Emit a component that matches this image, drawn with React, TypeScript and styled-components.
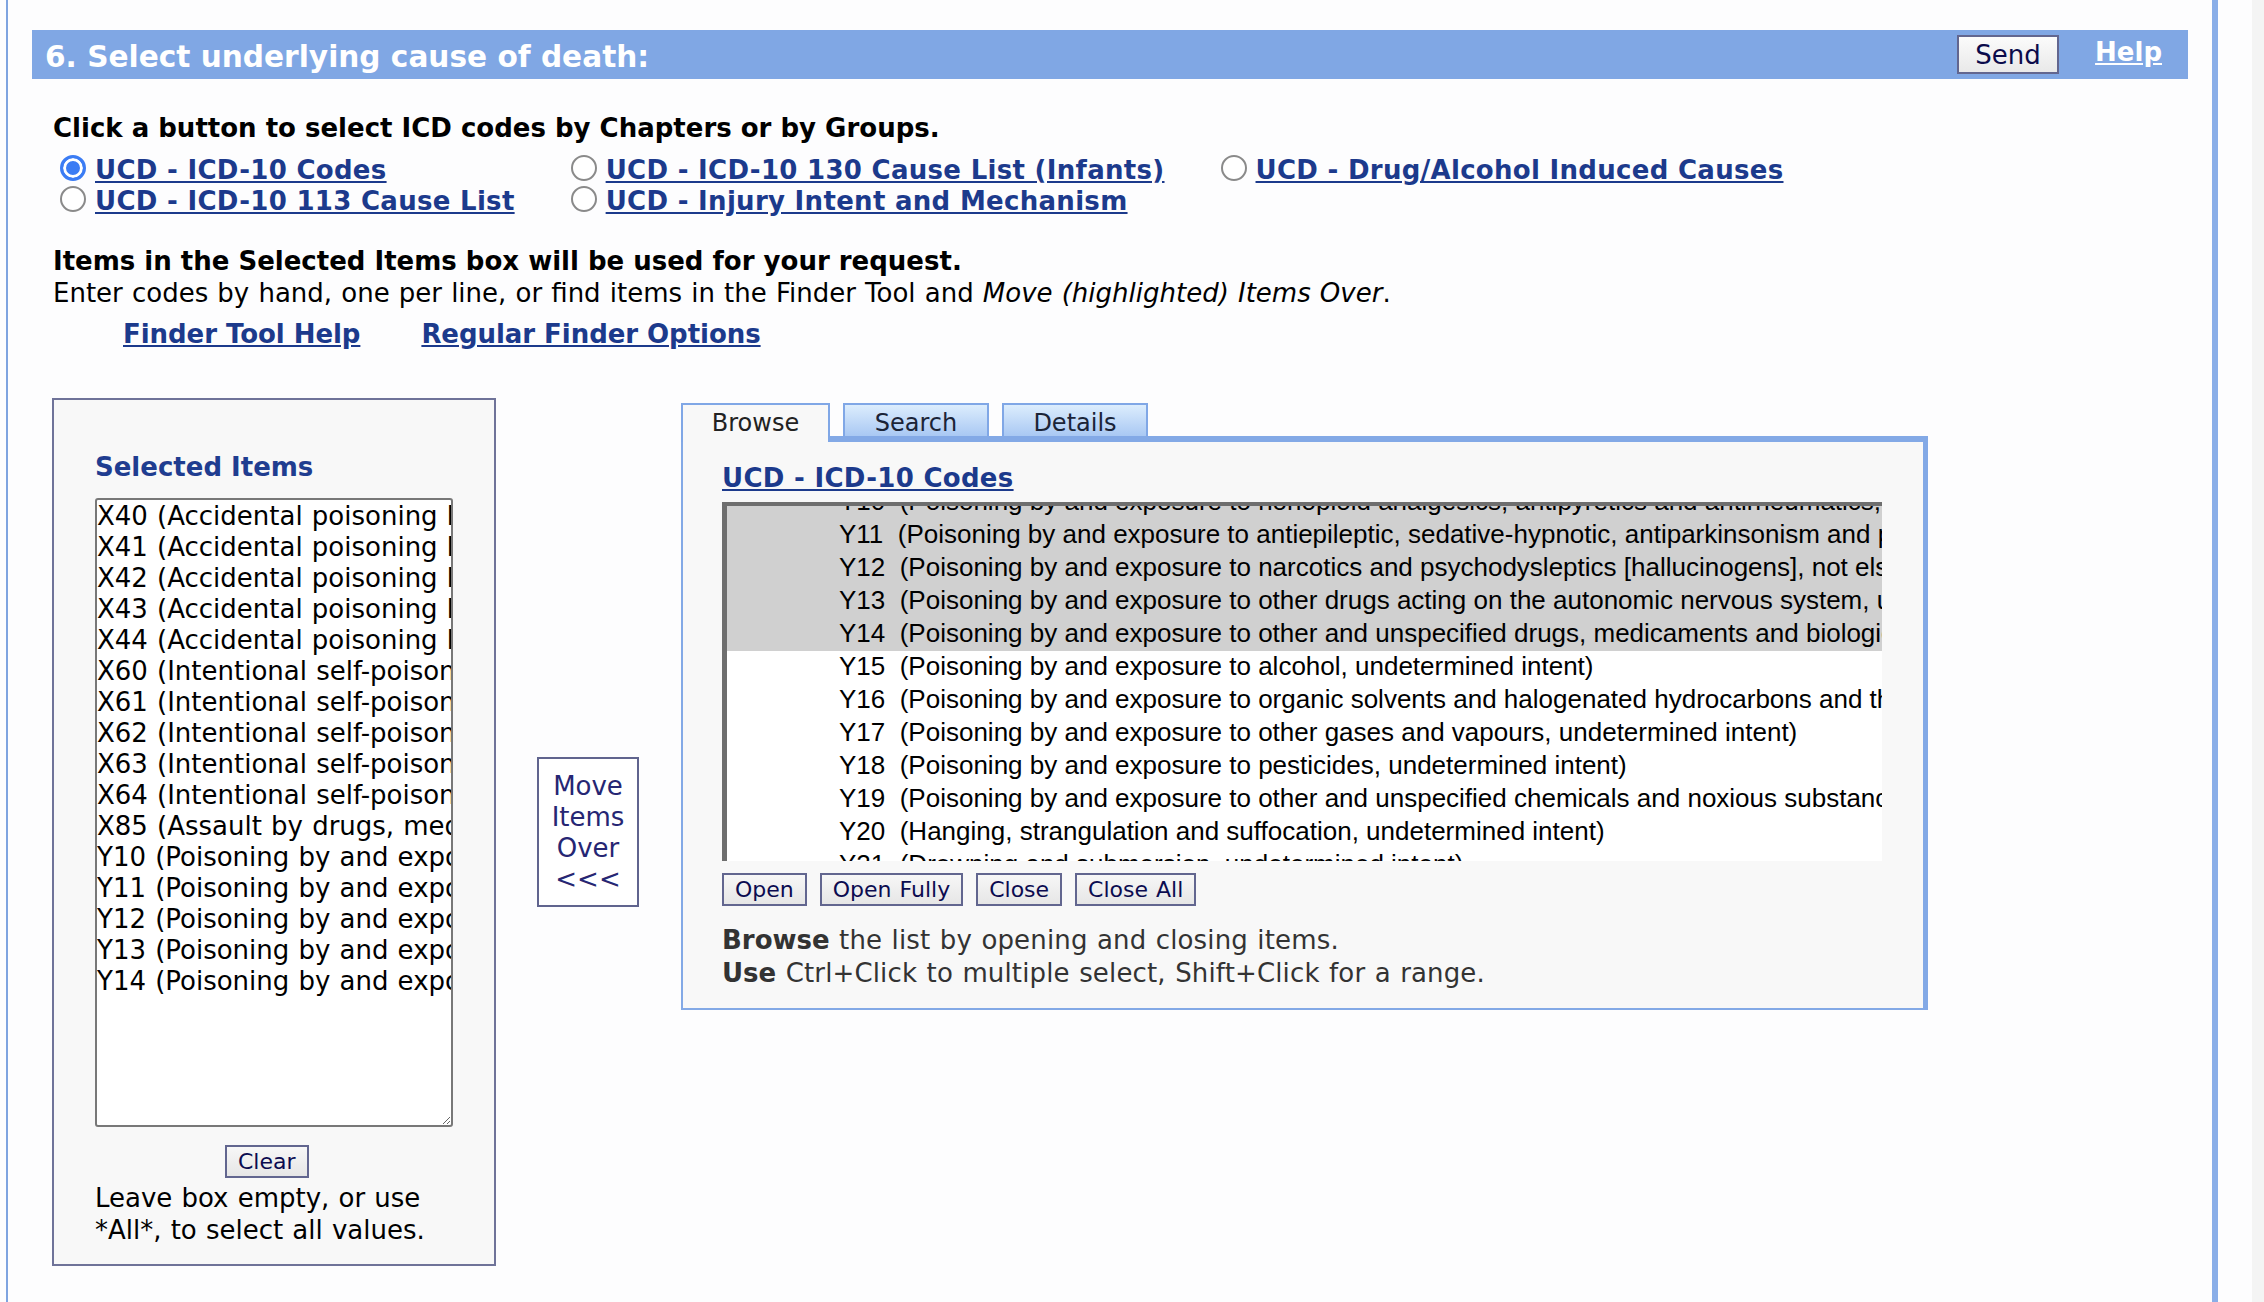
import React from "react";
import styled, { createGlobalStyle } from "styled-components";

const GlobalStyle = createGlobalStyle`
  *, *::before, *::after { box-sizing: border-box; }
  html, body { margin: 0; padding: 0; background: #fdfdfe; }
  body { font-family: "DejaVu Sans", Verdana, sans-serif; color: #000; }
`;

const Viewport = styled.div`
  display: flex;
  height: 1302px;
  overflow: hidden;
`;

const Page = styled.div`
  margin-left: 6px;
  width: 2212px;
  border-left: 2px solid #7fa4e0;
  border-right: 6px solid #8aaee8;
  padding: 30px 24px 0;
`;

const ScrollTrack = styled.div`
  margin-left: auto;
  width: 12px;
  background: #f4f4f4;
`;

const HeaderBar = styled.div`
  display: flex;
  align-items: center;
  height: 49px;
  background: #80a7e4;
  padding: 0 26px 0 13px;
`;

const Title = styled.h2`
  flex: 1;
  margin: 4px 0 0;
  font-size: 29.6px;
  font-weight: bold;
  color: #fff;
  white-space: nowrap;
`;

const SendButton = styled.button`
  width: 102px;
  height: 39px;
  margin-right: 36px;
  padding: 0;
  border: 2px solid #62668f;
  background: linear-gradient(#fbfbfb, #e9e9e9);
  color: #0b0b4b;
  font: 26px "DejaVu Sans", Verdana, sans-serif;
`;

const HelpLink = styled.a`
  margin-bottom: 5px;
  font-size: 26px;
  font-weight: bold;
  color: #fff;
  text-decoration: underline;
`;

const Body = styled.div`
  padding-left: 21px;
`;

const Para = styled.p<{ $lh: number; $mt: number; $bold?: boolean }>`
  margin: ${(p) => p.$mt}px 0 0;
  font-size: 26px;
  line-height: ${(p) => p.$lh}px;
  font-weight: ${(p) => (p.$bold ? "bold" : "normal")};
  word-spacing: ${(p) => (p.$bold ? 0 : 0.9)}px;
  white-space: nowrap;
`;

const Strong = styled.strong`
  font-weight: bold;
  word-spacing: 0;
  letter-spacing: 0;
`;

const RadioGrid = styled.div`
  display: grid;
  grid-template-columns: repeat(3, max-content);
  column-gap: 56px;
  margin-top: 11px;
  padding-left: 7px;
`;

const RadioOption = styled.label`
  display: flex;
  align-items: flex-start;
  gap: 9px;
  height: 31px;
  font-size: 26px;
  line-height: 31px;
`;

const Radio = styled.input.attrs({ type: "radio" })`
  appearance: none;
  margin: 0;
  width: 26px;
  height: 26px;
  flex: none;
  border-radius: 50%;
  border: 2px solid #8a8a8a;
  background: #fff;
  &:checked {
    border: 3px solid #3b7cf4;
    background: #3b7cf4;
    box-shadow: inset 0 0 0 3px #fff;
  }
`;

const BlueLink = styled.a<{ $tight?: boolean }>`
  font-weight: bold;
  color: #1c3a8c;
  text-decoration: underline;
  letter-spacing: ${(p) => (p.$tight ? -0.05 : 0.3)}px;
  white-space: nowrap;
`;

const LinkRow = styled.div`
  display: flex;
  gap: 61px;
  margin-top: 10px;
  padding-left: 70px;
  font-size: 26px;
  line-height: 31px;
`;

const PanelsRow = styled.div`
  display: flex;
  align-items: flex-start;
  margin-top: 48px;
  margin-left: -1px;
`;

const SelectedPanel = styled.div`
  width: 444px;
  border: 2px solid #6f7399;
  background: #f8f8f8;
  padding: 52px 41px 18px;
`;

const PanelHeading = styled.div`
  font-size: 26px;
  line-height: 31px;
  font-weight: bold;
  color: #1f3d90;
`;

const ItemsBox = styled.textarea`
  display: block;
  width: 358px;
  height: 629px;
  margin-top: 15px;
  padding: 1px 0;
  border: 2px solid #787878;
  border-radius: 3px;
  background: #fff;
  color: #000;
  font: 26px/31px "DejaVu Sans", Verdana, sans-serif;
  word-spacing: 0.9px;
  white-space: pre;
  overflow: hidden;
  resize: both;
  outline: none;
`;

const SmallButton = styled.button<{ $ml?: number }>`
  height: 33px;
  margin-left: ${(p) => p.$ml ?? 0}px;
  padding: 0 11px;
  border: 2px solid #62668f;
  background: linear-gradient(#f7f7f7, #e6e6e6);
  color: #0b0b50;
  font: 22px "DejaVu Sans", Verdana, sans-serif;
  word-spacing: 1px;
`;

const ClearWrap = styled.div`
  margin-top: 18px;
`;

const Note = styled.div`
  margin-top: 4px;
  font-size: 26px;
  line-height: 32px;
  word-spacing: 0.9px;
  white-space: nowrap;
`;

const MoveButton = styled.button`
  align-self: center;
  width: 102px;
  height: 150px;
  margin: 0 42px 0 41px;
  padding: 2px 0 0;
  border: 2px solid #60648e;
  background: #fff;
  color: #262673;
  font: 26px/31px "DejaVu Sans", Verdana, sans-serif;
`;

const FinderBox = styled.div`
  width: 1247px;
  margin-top: 5px;
`;

const TabStrip = styled.div`
  display: flex;
  align-items: flex-start;
  gap: 13px;
  height: 33px;
`;

const Tab = styled.div<{ $active?: boolean }>`
  position: relative;
  z-index: 1;
  width: ${(p) => (p.$active ? 149 : 146)}px;
  height: ${(p) => (p.$active ? 39 : 33)}px;
  padding-top: 4px;
  border: 2px solid #80a7e6;
  border-bottom: none;
  background: ${(p) =>
    p.$active ? "#f8f8f8" : "linear-gradient(#dcedfd, #a9c8f3)"};
  color: ${(p) => (p.$active ? "#222" : "#1b2437")};
  font-size: 24px;
  text-align: center;
`;

const FinderBody = styled.div`
  border: 2px solid #83a9e6;
  border-top-width: 6px;
  border-right-width: 5px;
  background: #f8f8f8;
  padding: 21px 41px 18px 39px;
`;

const FinderTitle = styled.div`
  font-size: 26px;
  line-height: 31px;
`;

const TreeList = styled.div`
  height: 359px;
  margin-top: 8px;
  border-top: 4px solid #6e6e6e;
  border-left: 5px solid #6e6e6e;
  background: #fff;
  overflow: hidden;
`;

const TreeInner = styled.div`
  margin-top: -20px;
`;

const TreeRow = styled.div<{ $selected?: boolean }>`
  height: 33px;
  padding-left: 112px;
  background: ${(p) => (p.$selected ? "#d0d0d0" : "transparent")};
  font: 26px/30px "Liberation Sans", Arial, sans-serif;
  color: #000;
  white-space: pre;
`;

const ButtonRow = styled.div`
  display: flex;
  gap: 13px;
  margin-top: 12px;
`;

const HelpText = styled.div`
  margin-top: 18px;
  font-size: 26px;
  line-height: 33px;
  word-spacing: 1px;
  letter-spacing: 0.15px;
  color: #333;
  white-space: nowrap;
`;

const selectedItems = [
  "X40 (Accidental poisoning by and exposure to nonopioid analgesics, antipyretics and antirheumatics)",
  "X41 (Accidental poisoning by and exposure to antiepileptic, sedative-hypnotic, antiparkinsonism and psychotropic drugs, not elsewhere classified)",
  "X42 (Accidental poisoning by and exposure to narcotics and psychodysleptics [hallucinogens], not elsewhere classified)",
  "X43 (Accidental poisoning by and exposure to other drugs acting on the autonomic nervous system)",
  "X44 (Accidental poisoning by and exposure to other and unspecified drugs, medicaments and biological substances)",
  "X60 (Intentional self-poisoning by and exposure to nonopioid analgesics, antipyretics and antirheumatics)",
  "X61 (Intentional self-poisoning by and exposure to antiepileptic, sedative-hypnotic, antiparkinsonism and psychotropic drugs, not elsewhere classified)",
  "X62 (Intentional self-poisoning by and exposure to narcotics and psychodysleptics [hallucinogens], not elsewhere classified)",
  "X63 (Intentional self-poisoning by and exposure to other drugs acting on the autonomic nervous system)",
  "X64 (Intentional self-poisoning by and exposure to other and unspecified drugs, medicaments and biological substances)",
  "X85 (Assault by drugs, medicaments and biological substances)",
  "Y10 (Poisoning by and exposure to nonopioid analgesics, antipyretics and antirheumatics, undetermined intent)",
  "Y11 (Poisoning by and exposure to antiepileptic, sedative-hypnotic, antiparkinsonism and psychotropic drugs, not elsewhere classified, undetermined intent)",
  "Y12 (Poisoning by and exposure to narcotics and psychodysleptics [hallucinogens], not elsewhere classified, undetermined intent)",
  "Y13 (Poisoning by and exposure to other drugs acting on the autonomic nervous system, undetermined intent)",
  "Y14 (Poisoning by and exposure to other and unspecified drugs, medicaments and biological substances, undetermined intent)",
];

const treeRows: { code: string; text: string; selected?: boolean }[] = [
  { code: "Y10", text: "(Poisoning by and exposure to nonopioid analgesics, antipyretics and antirheumatics, undetermined intent)", selected: true },
  { code: "Y11", text: "(Poisoning by and exposure to antiepileptic, sedative-hypnotic, antiparkinsonism and psychotropic drugs, not elsewhere classified, undetermined intent)", selected: true },
  { code: "Y12", text: "(Poisoning by and exposure to narcotics and psychodysleptics [hallucinogens], not elsewhere classified, undetermined intent)", selected: true },
  { code: "Y13", text: "(Poisoning by and exposure to other drugs acting on the autonomic nervous system, undetermined intent)", selected: true },
  { code: "Y14", text: "(Poisoning by and exposure to other and unspecified drugs, medicaments and biological substances, undetermined intent)", selected: true },
  { code: "Y15", text: "(Poisoning by and exposure to alcohol, undetermined intent)" },
  { code: "Y16", text: "(Poisoning by and exposure to organic solvents and halogenated hydrocarbons and their vapours, undetermined intent)" },
  { code: "Y17", text: "(Poisoning by and exposure to other gases and vapours, undetermined intent)" },
  { code: "Y18", text: "(Poisoning by and exposure to pesticides, undetermined intent)" },
  { code: "Y19", text: "(Poisoning by and exposure to other and unspecified chemicals and noxious substances, undetermined intent)" },
  { code: "Y20", text: "(Hanging, strangulation and suffocation, undetermined intent)" },
  { code: "Y21", text: "(Drowning and submersion, undetermined intent)" },
];

const radioOptions: (string | null)[] = [
  "UCD - ICD-10 Codes",
  "UCD - ICD-10 130 Cause List (Infants)",
  "UCD - Drug/Alcohol Induced Causes",
  "UCD - ICD-10 113 Cause List",
  "UCD - Injury Intent and Mechanism",
  null,
];

export default function App() {
  return (
    <>
      <GlobalStyle />
      <Viewport>
        <Page>
          <HeaderBar>
            <Title>6. Select underlying cause of death:</Title>
            <SendButton type="button">Send</SendButton>
            <HelpLink href="#">Help</HelpLink>
          </HeaderBar>
          <Body>
            <Para $lh={31} $mt={33.5} $bold>
              Click a button to select ICD codes by Chapters or by Groups.
            </Para>
            <RadioGrid>
              {radioOptions.map((label, i) =>
                label ? (
                  <RadioOption key={i}>
                    <Radio name="ucd" defaultChecked={i === 0} />
                    <BlueLink href="#">{label}</BlueLink>
                  </RadioOption>
                ) : (
                  <span key={i} />
                )
              )}
            </RadioGrid>
            <Para $lh={32} $mt={28}>
              <Strong>Items in the Selected Items box will be used for your request.</Strong>
              <br />
              Enter codes by hand, one per line, or find items in the Finder Tool and{" "}
              <em>Move (highlighted) Items Over</em>.
            </Para>
            <LinkRow>
              <BlueLink href="#" $tight>Finder Tool Help</BlueLink>
              <BlueLink href="#" $tight>Regular Finder Options</BlueLink>
            </LinkRow>
            <PanelsRow>
              <SelectedPanel>
                <PanelHeading>Selected Items</PanelHeading>
                <ItemsBox wrap="off" spellCheck={false} defaultValue={selectedItems.join("\n")} />
                <ClearWrap>
                  <SmallButton type="button" $ml={130}>Clear</SmallButton>
                </ClearWrap>
                <Note>
                  Leave box empty, or use
                  <br />
                  *All*, to select all values.
                </Note>
              </SelectedPanel>
              <MoveButton type="button">
                Move
                <br />
                Items
                <br />
                Over
                <br />
                &lt;&lt;&lt;
              </MoveButton>
              <FinderBox>
                <TabStrip>
                  <Tab $active>Browse</Tab>
                  <Tab>Search</Tab>
                  <Tab>Details</Tab>
                </TabStrip>
                <FinderBody>
                  <FinderTitle>
                    <BlueLink href="#">UCD - ICD-10 Codes</BlueLink>
                  </FinderTitle>
                  <TreeList>
                    <TreeInner>
                      {treeRows.map((r) => (
                        <TreeRow key={r.code} $selected={r.selected}>
                          {r.code + "  " + r.text}
                        </TreeRow>
                      ))}
                    </TreeInner>
                  </TreeList>
                  <ButtonRow>
                    <SmallButton type="button">Open</SmallButton>
                    <SmallButton type="button">Open Fully</SmallButton>
                    <SmallButton type="button">Close</SmallButton>
                    <SmallButton type="button">Close All</SmallButton>
                  </ButtonRow>
                  <HelpText>
                    <Strong>Browse</Strong> the list by opening and closing items.
                    <br />
                    <Strong>Use</Strong> Ctrl+Click to multiple select, Shift+Click for a range.
                  </HelpText>
                </FinderBody>
              </FinderBox>
            </PanelsRow>
          </Body>
        </Page>
        <ScrollTrack />
      </Viewport>
    </>
  );
}
